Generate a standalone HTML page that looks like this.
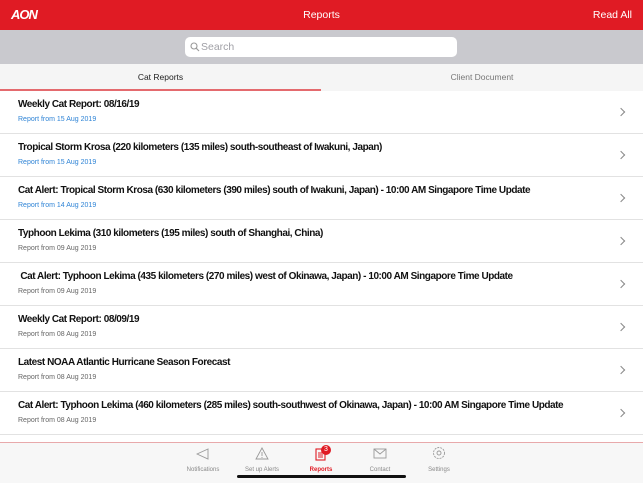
<!DOCTYPE html><html><head><style>
body{margin:0;width:643px;height:482px;overflow:hidden;font-family:"Liberation Sans",sans-serif;background:#fff;position:relative}
.hd{position:absolute;top:0;left:0;width:643px;height:30px;background:#e01b24;color:#fff}
.sb{position:absolute;top:30px;width:643px;height:34px;background:#c9c9ce}
.sr{position:absolute;left:185px;top:7px;width:272px;height:20px;background:#fff;border-radius:5px;color:#a0a0a6;font-size:10.5px;line-height:20px}
.tabs{position:absolute;top:64px;width:643px;height:27px;background:#f5f5f5;font-size:8.5px}
.row{position:absolute;left:0;width:643px;height:42px;border-bottom:1px solid #e2e2e2}
.t{position:absolute;left:18px;top:8px;font-size:10px;letter-spacing:-0.45px;font-weight:bold;color:#111;white-space:nowrap}
.s{position:absolute;left:18px;top:25px;font-size:7px;color:#666}
.s.b{color:#2f84d6}
.ch{position:absolute;right:19px;top:18px;width:5px;height:5px;border-right:1.2px solid #888;border-top:1.2px solid #888;transform:rotate(45deg)}
.tb{position:absolute;top:442px;width:643px;height:40px;background:#f7f7f7;border-top:1px solid #e8a9ab}
.it{position:absolute;top:24px;font-size:6px;color:#888;width:60px;text-align:center}
</style></head><body>
<div class="hd"><span style="position:absolute;left:11px;top:7px;font-weight:bold;font-style:italic;font-size:13px;letter-spacing:-1px">AON</span><span style="position:absolute;left:0;width:643px;text-align:center;top:9px;font-size:10.5px">Reports</span><span style="position:absolute;right:11px;top:9px;font-size:10.5px">Read All</span></div>
<div class="sb"><div class="sr"><svg width="10" height="10" style="position:absolute;left:5px;top:5px" viewBox="0 0 10 10"><circle cx="4" cy="4" r="3" fill="none" stroke="#999" stroke-width="1.1"/><path d="M6.2 6.2L9 9" stroke="#999" stroke-width="1.1"/></svg><span style="position:absolute;left:16px">Search</span></div></div>
<div class="tabs"><span style="position:absolute;left:0;width:321px;text-align:center;top:8px;color:#222">Cat Reports</span><span style="position:absolute;left:321px;width:322px;text-align:center;top:8px;color:#777">Client Document</span><div style="position:absolute;left:0;top:25px;width:321px;height:1.5px;background:#e46a6e"></div></div>
<div class="row" style="top:91px"><div class="t">Weekly Cat Report: 08/16/19</div><div class="s b">Report from 15 Aug 2019</div><div class="ch"></div></div>
<div class="row" style="top:134px"><div class="t">Tropical Storm Krosa (220 kilometers (135 miles) south-southeast of Iwakuni, Japan)</div><div class="s b">Report from 15 Aug 2019</div><div class="ch"></div></div>
<div class="row" style="top:177px"><div class="t">Cat Alert: Tropical Storm Krosa (630 kilometers (390 miles) south of Iwakuni, Japan) - 10:00 AM Singapore Time Update</div><div class="s b">Report from 14 Aug 2019</div><div class="ch"></div></div>
<div class="row" style="top:220px"><div class="t">Typhoon Lekima (310 kilometers (195 miles) south of Shanghai, China)</div><div class="s">Report from 09 Aug 2019</div><div class="ch"></div></div>
<div class="row" style="top:263px"><div class="t">&nbsp;Cat Alert: Typhoon Lekima (435 kilometers (270 miles) west of Okinawa, Japan) - 10:00 AM Singapore Time Update</div><div class="s">Report from 09 Aug 2019</div><div class="ch"></div></div>
<div class="row" style="top:306px"><div class="t">Weekly Cat Report: 08/09/19</div><div class="s">Report from 08 Aug 2019</div><div class="ch"></div></div>
<div class="row" style="top:349px"><div class="t">Latest NOAA Atlantic Hurricane Season Forecast</div><div class="s">Report from 08 Aug 2019</div><div class="ch"></div></div>
<div class="row" style="top:392px"><div class="t">Cat Alert: Typhoon Lekima (460 kilometers (285 miles) south-southwest of Okinawa, Japan) - 10:00 AM Singapore Time Update</div><div class="s">Report from 08 Aug 2019</div><div class="ch"></div></div>
<div class="tb">
<svg style="position:absolute;left:196px;top:5px" width="14" height="12" viewBox="0 0 14 12"><path d="M12 1L1 6L12 11Z" fill="none" stroke="#999" stroke-width="0.9"/></svg><div class="it" style="left:173px">Notifications</div>
<svg style="position:absolute;left:255px;top:4px" width="14" height="13" viewBox="0 0 14 13"><path d="M7 1L13 12H1Z" fill="none" stroke="#999" stroke-width="0.9"/><path d="M7 5v4M7 10v1" stroke="#999" stroke-width="0.9"/></svg><div class="it" style="left:232px">Set up Alerts</div>
<svg style="position:absolute;left:315px;top:4px" width="12" height="14" viewBox="0 0 12 14"><rect x="1" y="2" width="9" height="11" fill="none" stroke="#e01b24" stroke-width="1.1"/><path d="M3 6h5M3 8h5M3 10h5" stroke="#e01b24"/></svg><div style="position:absolute;left:321px;top:2px;width:10px;height:10px;border-radius:5px;background:#e01b24;color:#fff;font-size:7px;text-align:center;line-height:10px">3</div><div class="it" style="left:291px;color:#e01b24;font-weight:bold">Reports</div>
<svg style="position:absolute;left:373px;top:5px" width="14" height="11" viewBox="0 0 14 11"><rect x="1" y="1" width="12" height="9" fill="none" stroke="#999" stroke-width="0.9"/><path d="M1 1l6 5 6-5" fill="none" stroke="#999" stroke-width="0.9"/></svg><div class="it" style="left:350px">Contact</div>
<svg style="position:absolute;left:432px;top:3px" width="14" height="14" viewBox="0 0 14 14"><circle cx="7" cy="7" r="5.5" fill="none" stroke="#999" stroke-width="0.9" stroke-dasharray="2 1"/><circle cx="7" cy="7" r="2" fill="none" stroke="#999" stroke-width="0.9"/></svg><div class="it" style="left:409px">Settings</div>
<div style="position:absolute;left:237px;top:32px;width:169px;height:3px;border-radius:2px;background:#111"></div>
</div>
</body></html>
